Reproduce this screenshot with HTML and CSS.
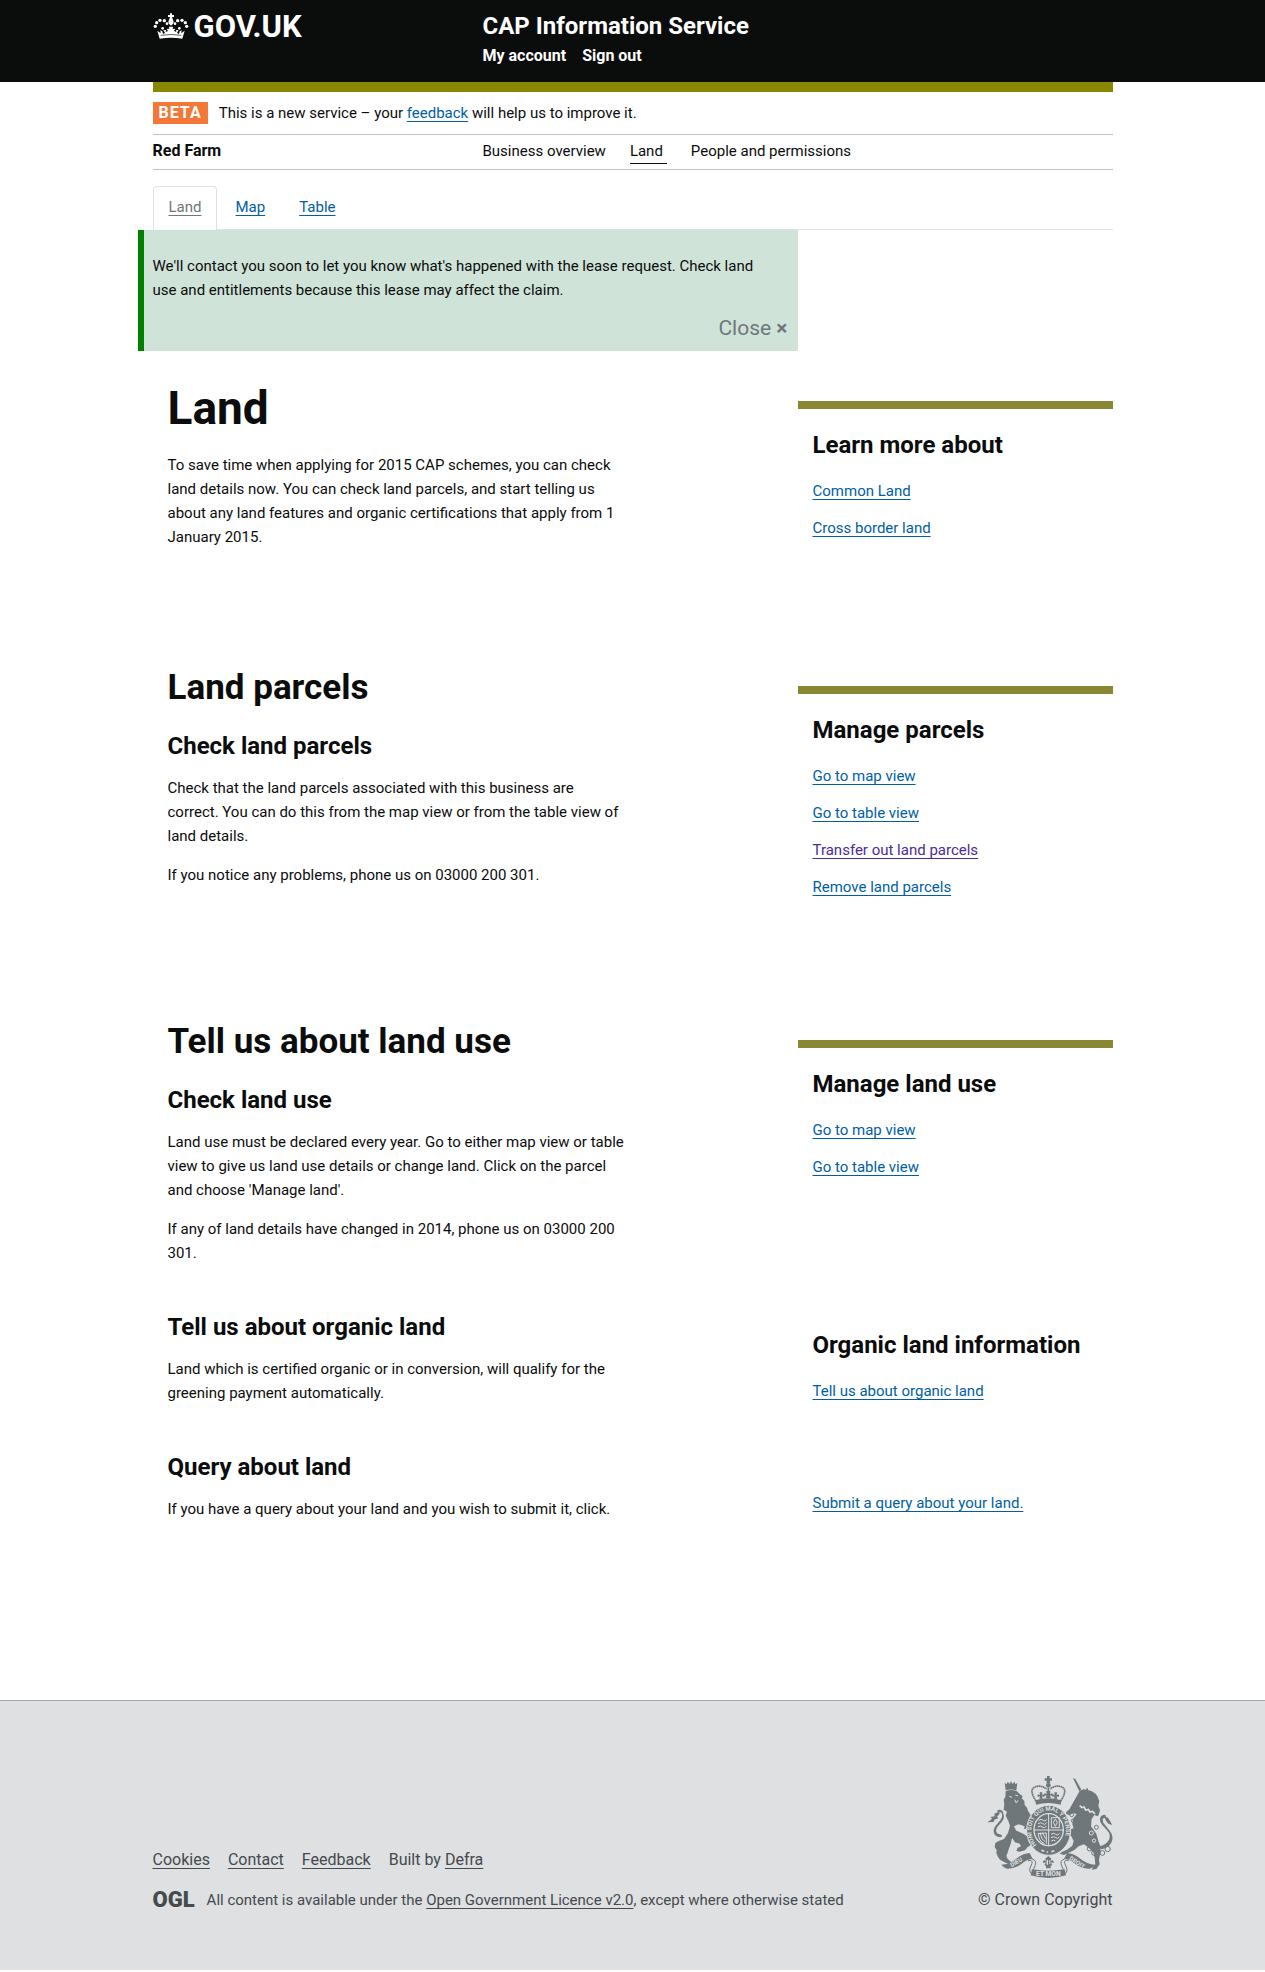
FILE: index.html
```html
<!DOCTYPE html>
<html lang="en">
<head>
<meta charset="utf-8">
<meta name="viewport" content="width=device-width, initial-scale=1">
<title>Land - CAP Information Service</title>
<link rel="stylesheet" href="styles.css">
</head>
<body>
<header class="site-header">
  <div class="wrap site-header__inner">
    <a class="logo" href="#">
      <svg class="logo__crown" viewBox="68 38 106 78" aria-hidden="true">
        <g fill="currentColor">
          <path d="M80 91l7 24q34-6 68 0l7-24-10 8 1-9-6 3-2 8-6-3 5-9h-8l1 6-7-3 4-6-8-1 1-6h-12l1 6-8 1 4 6-7 3 1-6h-8l5 9-6 3-2-8-6-3 1 9z"/>
          <path d="M118 39h6v5h6v6h-6l3 9q6 9-6 17-12-8-6-17l3-9h-6v-6h6z"/>
          <circle cx="74" cy="78" r="5"/><circle cx="78" cy="67" r="5"/><circle cx="88" cy="60" r="5"/><circle cx="101" cy="61" r="5"/><circle cx="109" cy="70" r="4"/>
          <circle cx="168" cy="78" r="5"/><circle cx="164" cy="67" r="5"/><circle cx="154" cy="60" r="5"/><circle cx="141" cy="61" r="5"/><circle cx="133" cy="70" r="4"/>
          <circle cx="96" cy="84" r="4"/><circle cx="146" cy="84" r="4"/>
        </g>
        <path d="M90 105q31-5 62 0" fill="none" stroke="#0b0c0c" stroke-width="2"/>
      </svg>
      <span class="logo__text">GOV.UK</span>
    </a>
    <div>
      <p class="service-name">CAP Information Service</p>
      <nav class="account-links" aria-label="Account">
        <a href="#">My account</a>
        <a href="#">Sign out</a>
      </nav>
    </div>
  </div>
</header>

<div class="wrap page">
  <div class="phase-banner">
    <strong class="phase-tag">BETA</strong>
    <p>This is a new service – your <a href="#">feedback</a> will help us to improve it.</p>
  </div>

  <div class="business-bar">
    <strong>Red Farm</strong>
    <nav class="business-nav" aria-label="Business">
      <a href="#">Business overview</a>
      <a class="is-current" href="#">Land</a>
      <a href="#">People and permissions</a>
    </nav>
  </div>

  <nav class="tabs" aria-label="Land views">
    <a class="tab is-active" href="#">Land</a>
    <a class="tab" href="#">Map</a>
    <a class="tab" href="#">Table</a>
  </nav>

  <div class="alert" role="status">
    <p>We'll contact you soon to let you know what's happened with the lease request. Check land use and entitlements because this lease may affect the claim.</p>
    <button class="alert__close" type="button">Close <span class="alert__x">×</span></button>
  </div>

  <main>
    <section class="row row--intro">
      <div class="row__main">
        <h1>Land</h1>
        <p>To save time when applying for 2015 CAP schemes, you can check land details now. You can check land parcels, and start telling us about any land features and organic certifications that apply from 1 January 2015.</p>
      </div>
      <aside class="row__side row__side--ruled">
        <h3>Learn more about</h3>
        <ul>
          <li><a href="#">Common Land</a></li>
          <li><a href="#">Cross border land</a></li>
        </ul>
      </aside>
    </section>

    <section class="row row--parcels">
      <div class="row__main">
        <h2>Land parcels</h2>
        <h3>Check land parcels</h3>
        <p>Check that the land parcels associated with this business are correct. You can do this from the map view or from the table view of land details.</p>
        <p>If you notice any problems, phone us on 03000 200 301.</p>
      </div>
      <aside class="row__side row__side--ruled">
        <h3>Manage parcels</h3>
        <ul>
          <li><a href="#">Go to map view</a></li>
          <li><a href="#">Go to table view</a></li>
          <li><a class="is-visited" href="#">Transfer out land parcels</a></li>
          <li><a href="#">Remove land parcels</a></li>
        </ul>
      </aside>
    </section>

    <section class="row">
      <div class="row__main">
        <h2>Tell us about land use</h2>
        <h3>Check land use</h3>
        <p>Land use must be declared every year. Go to either map view or table view to give us land use details or change land. Click on the parcel and choose 'Manage land'.</p>
        <p>If any of land details have changed in 2014, phone us on 03000 200 301.</p>
      </div>
      <aside class="row__side row__side--ruled">
        <h3>Manage land use</h3>
        <ul>
          <li><a href="#">Go to map view</a></li>
          <li><a href="#">Go to table view</a></li>
        </ul>
      </aside>
    </section>

    <section class="row">
      <div class="row__main">
        <h3>Tell us about organic land</h3>
        <p>Land which is certified organic or in conversion, will qualify for the greening payment automatically.</p>
      </div>
      <aside class="row__side">
        <h3>Organic land information</h3>
        <ul>
          <li><a href="#">Tell us about organic land</a></li>
        </ul>
      </aside>
    </section>

    <section class="row">
      <div class="row__main">
        <h3>Query about land</h3>
        <p>If you have a query about your land and you wish to submit it, click.</p>
      </div>
      <aside class="row__side row__side--link">
        <a href="#">Submit a query about your land.</a>
      </aside>
    </section>
  </main>
</div>

<footer class="site-footer">
  <div class="wrap site-footer__inner">
    <div>
      <ul class="footer-links">
        <li><a href="#">Cookies</a></li>
        <li><a href="#">Contact</a></li>
        <li><a href="#">Feedback</a></li>
        <li>Built by <a href="#">Defra</a></li>
      </ul>
      <div class="licence">
        <span class="licence__logo">OGL</span>
        <p>All content is available under the <a href="#">Open Government Licence v2.0</a>, except where otherwise stated</p>
      </div>
    </div>
    <div class="copyright">
      <svg class="crest" viewBox="84 48 376 312" aria-hidden="true">
        <g fill="#6f777b">
          <!-- central crown -->
          <path d="M263 51h8v7h7v7h-7l2 8h-12l2-8h-7v-7h7z"/>
          <circle cx="267" cy="79" r="7"/>
          <path d="M228 124q39-12 78 0l-2 13q-37-10-74 0z"/>
          <path d="M240 120l2-8-7 2v-8l7 2-1-8h8l-1 8 7-2v8l-7-2 2 7zM259 118l3-9-8 2v-8l8 2-1-9h12l-1 9 8-2v8l-8-2 3 9zM284 119l2-7-7 2v-8l7 2-1-8h8l-1 8 7-2v8l-7-2 2 8z"/>
        </g>
        <g fill="none" stroke="#6f777b" stroke-width="5">
          <path d="M230 126q-20-30-7-40 19-11 39 4M304 126q20-30 7-40-19-11-39 4" stroke-dasharray="5 1"/>
          <path d="M267 86v16"/>
        </g>
        <g fill="#6f777b">
          <!-- lion -->
          <path d="M136 71l6 5 3-8 6 7 4-9 4 9 7-7 2 8 6-4-3 22q-16-5-32 0z"/>
          <path d="M139 97q16-7 33-1l10 10 8 6-3 6 8 8 1 12 7 8 3 10 8 12-3 8-2 8 4 8 7 6-2 14-6-2-4 5-5-6-9 1 2-8-18-6-14 6 7 14-6 18-8 6-2 12-8 22q-3 12-6 16l4 10 10 8-3 7-12-3-18-10-6-8-5-12 1-8-6-10 2-12 10-6 16-6 12-18 6-22-5-14-8-16 4-12-10-6 2-18-2-12 5-8z"/>
          <path d="M168 214l24 10 18 12-4 8 10 2 3 10-14 8-8 10-16 4-10-2 4-10 10-4-4-8-14-4-8-12z"/>
          <path d="M84 190l14-10-4-6 12-2-1-8 10-4-1-6q12-5 17 5l3 14q0 8-7 16l-13 15q-8 12 1 20l13 4-2 7q-17 0-22-12-4-12 6-24l13-15q8-10 5-20-3-6-9-3l2 5-8 6 4 6-12 4-2 7z"/>
          <!-- unicorn -->
          <path d="M341 57l7 3 18 32-6 5z"/>
          <path d="M361 96l13-6 5 3 5-7 3 8q19 4 27 18l6 14-3 14 5 14-4 14-3 4-10-4-8 12-2 22 16 22 6 22 6 16 1 16-5 24 2 14-10 14-14 2 4-8 7-8-2-20-4-16-14-14-14-10-16 6-14 12-18 8-12 6-13-4 8-6 14-6 16-12 4-14-7-14-15-2-9-12-15-8-4-12-6-10 4-6 10 2 10 14 18 4 6 8 8-2-4-12 2-16 11-15-11-3-9 6-11-2-1-6 10-9z"/>
          <path d="M419 262q22-5 30-20 7-16-6-28l-16-18q-9-12-2-24 8-8 15-2l-2 6q-7 0-8 5-1 10 8 18l14 18q12 14 5 32-8 17-30 22l-6-3zM434 172l12 4 6 10 7 12-12-4-7-9z"/>
        </g>
        <!-- garter and shield -->
        <ellipse cx="268" cy="214" rx="66" ry="75" fill="#6f777b" stroke="#dee0e2" stroke-width="3"/>
        <ellipse cx="268" cy="212" rx="46" ry="50" fill="#dee0e2"/>
        <ellipse cx="268" cy="212" rx="42" ry="46" fill="#6f777b"/>
        <path d="M268 164v98M224 213h88" stroke="#dee0e2" stroke-width="3"/>
        <g fill="none" stroke="#dee0e2" stroke-width="3">
          <path d="M238 184q8-6 14 0t10-3M236 194q8-6 14 0t12-3M235 204q8-6 14 0t13-3"/>
          <path d="M276 176h24v30h-24zM288 180l6 10-6 12-6-12z"/>
          <path d="M237 222q0 24 18 32M243 221q2 20 14 26M249 221l10 18M235 224l26-2v32"/>
          <path d="M275 226q8-6 14 0t12-3M275 236q8-6 14 0t11-3M276 246q8-6 12 0"/>
        </g>
        <path id="garter" d="M232 258a52 60 0 1 1 72 0" fill="none"/>
        <text class="crest__text crest__text--garter"><textPath href="#garter">HONI SOIT QUI MAL Y PENSE</textPath></text>
        <path d="M246 274l9 3M262 279h4M276 278l9-3" stroke="#dee0e2" stroke-width="5" fill="none"/>
        <path d="M361 140l7 6 6-2 5 9 8-2 5 8 8-2 7 8" fill="none" stroke="#dee0e2" stroke-width="5"/>
        <g fill="none" stroke="#dee0e2" stroke-width="3">
          <path d="M150 112l8 3M168 108l8 3M166 122l5 10 5-8"/>
          <circle cx="396" cy="222" r="6"/><circle cx="404" cy="245" r="5"/>
        </g>
        <g fill="none" stroke="#6f777b" stroke-width="3">
          <circle cx="349" cy="151" r="6"/><circle cx="337" cy="167" r="6"/><circle cx="341" cy="185" r="5"/>
          <circle cx="411" cy="205" r="6"/><circle cx="391" cy="269" r="7"/><circle cx="404" cy="282" r="7"/><circle cx="429" cy="282" r="7"/><circle cx="445" cy="270" r="8"/>
        </g>
        <!-- ribbon -->
        <g fill="#6f777b">
          <path d="M126 317q24 0 48-20 16-14 37-15l9 18q-16 0-30 12-21 18-47 17-10-2-17-12z"/>
          <path d="M408 317q-24 0-48-20-16-14-37-15l-9 18q16 0 30 12 21 18 47 17 10-2 17-12z"/>
          <path d="M218 331q49 8 98 0l4 18q-52 16-106 0z"/>
          <path d="M255 318l5-8-9 2q-1-12 9-7l-2-6 9-8 9 8-2 6q10-5 9 7l-9-2 5 8-5 2v8h-14v-8z"/>
        </g>
        <path d="M206 305q14-4 12 8l-6 14q-4 14 10 20M328 305q-14-4-12 8l6 14q4 14-10 20M218 300q16 4 9 20l-5 12M316 300q-16 4-9 20l5 12" fill="none" stroke="#6f777b" stroke-width="3"/>
        <path d="M262 303h4v14h-4zM270 303h3v12h-3z" fill="#dee0e2"/>
        <text class="crest__text" transform="translate(157 325) rotate(-31)">DIEU</text>
        <text class="crest__text" transform="translate(328 301) rotate(33)">DROIT</text>
        <text class="crest__text crest__text--base" x="267" y="351">ET MON</text>
      </svg>
      <a class="copyright__link" href="#">© Crown Copyright</a>
    </div>
  </div>
</footer>
</body>
</html>
```
FILE: styles.css
```css
* {
  box-sizing: border-box;
}

body {
  margin: 0;
  background: #fff;
  color: #0b0c0c;
  font: 15px/24px Roboto, "Liberation Sans", sans-serif;
}

h1, h2, h3, p, ul {
  margin: 0;
  padding: 0;
}

ul {
  list-style: none;
}

a {
  color: #005ea5;
  text-underline-offset: 3px;
}

.wrap {
  max-width: 960px;
  margin: 0 auto;
}

/* Header */
.site-header {
  background: #0b0c0c;
  color: #fff;
}

.site-header__inner {
  display: grid;
  grid-template-columns: 330px 1fr;
  padding: 11px 0 14px;
}

.site-header a {
  color: #fff;
  text-decoration: none;
}

.logo {
  display: flex;
  align-items: flex-start;
  gap: 5px;
}

.logo__crown {
  width: 36px;
  height: 26px;
  margin-top: 2px;
}

.logo__text {
  font-size: 31px;
  font-weight: 700;
  line-height: 32px;
}

.service-name {
  font-size: 24px;
  font-weight: 700;
  line-height: 30px;
}

.account-links {
  display: flex;
  gap: 16px;
  margin-top: 3px;
  font-size: 16px;
  font-weight: 700;
}

/* Service bars */
.page {
  border-top: 10px solid #898700;
  padding-bottom: 164px;
}

.phase-banner {
  display: flex;
  align-items: center;
  gap: 11px;
  padding: 9px 0;
  border-bottom: 1px solid #bfc1c3;
}

.phase-tag {
  padding: 0 6px;
  background: #f47738;
  color: #fff;
  font-size: 16px;
  line-height: 22px;
  letter-spacing: 1px;
}

.business-bar {
  display: grid;
  grid-template-columns: 330px 1fr;
  padding: 4px 0 5px;
  border-bottom: 1px solid #bfc1c3;
}

.business-bar strong {
  font-size: 16px;
}

.business-nav {
  display: flex;
  gap: 24px;
}

.business-nav a {
  color: #0b0c0c;
  text-decoration: none;
}

.business-nav .is-current {
  padding-right: 4px;
  border-bottom: 1px solid #0b0c0c;
}

.tabs {
  display: flex;
  gap: 2px;
  padding-top: 16px;
  border-bottom: 1px solid #dee0e2;
}

.tab {
  margin-bottom: -1px;
  padding: 8px 15px 11px;
  border: 1px solid transparent;
  border-bottom: 0;
  border-radius: 4px 4px 0 0;
}

.tab.is-active {
  border-color: #dee0e2;
  background: #fff;
  color: #6f777b;
}

/* Notification */
.alert {
  display: flex;
  flex-direction: column;
  margin: 0 315px 0 -15px;
  padding: 24px 10px 8px 9px;
  border-left: 6px solid #008000;
  background: #cfe3d8;
}

.alert p {
  padding-right: 20px;
}

.alert__close {
  align-self: flex-end;
  margin-top: 11px;
  padding: 0;
  border: 0;
  background: none;
  color: #6f777b;
  font: 21px/30px Roboto, "Liberation Sans", sans-serif;
}

.alert__x {
  font-weight: 700;
}

/* Content rows */
.row {
  display: grid;
  grid-template-columns: 1fr 315px;
}

.row--intro {
  padding-bottom: 72px;
}

.row--parcels {
  padding-bottom: 88px;
}

.row__main {
  max-width: 488px;
  padding: 32px 15px 0;
}

.row__main p {
  margin-bottom: 15px;
}

h1 {
  margin-bottom: 20px;
  font-size: 46px;
  line-height: 50px;
}

h2 {
  margin-bottom: 23px;
  font-size: 35px;
  line-height: 40px;
}

h3 {
  margin-bottom: 15px;
  font-size: 24px;
  line-height: 30px;
}

.row__side {
  margin-top: 50px;
}

.row__side--ruled {
  border-top: 8px solid #898733;
  padding-top: 21px;
}

.row__side h3,
.row__side ul {
  margin: 0 0 0 15px;
}

.row__side ul {
  display: grid;
  gap: 13px;
  padding-top: 19px;
}

.row__side--link {
  padding: 21px 0 0 15px;
}

.is-visited {
  color: #4c2c92;
}

/* Footer */
.site-footer {
  border-top: 1px solid #a1acb2;
  background: #dee0e2;
  color: #454a4c;
}

.site-footer a {
  color: #454a4c;
}

.site-footer__inner {
  display: flex;
  align-items: flex-end;
  justify-content: space-between;
  padding: 74px 0 58px;
}

.footer-links {
  display: flex;
  gap: 18px;
  margin-bottom: 16px;
  font-size: 16px;
}

.licence {
  display: flex;
  align-items: center;
  gap: 12px;
}

.licence__logo {
  font-size: 22px;
  font-weight: 900;
}

.copyright {
  display: flex;
  flex-direction: column;
  align-items: flex-end;
  font-size: 16px;
}

.crest {
  width: 126px;
  height: 104px;
  margin-bottom: 9px;
}

.crest__text {
  fill: #dee0e2;
  font-size: 18px;
  font-weight: 700;
}

.crest__text--garter {
  font-size: 18px;
}

.crest__text--base {
  font-size: 20px;
  text-anchor: middle;
}

.site-footer .copyright__link {
  text-decoration: none;
}
```
